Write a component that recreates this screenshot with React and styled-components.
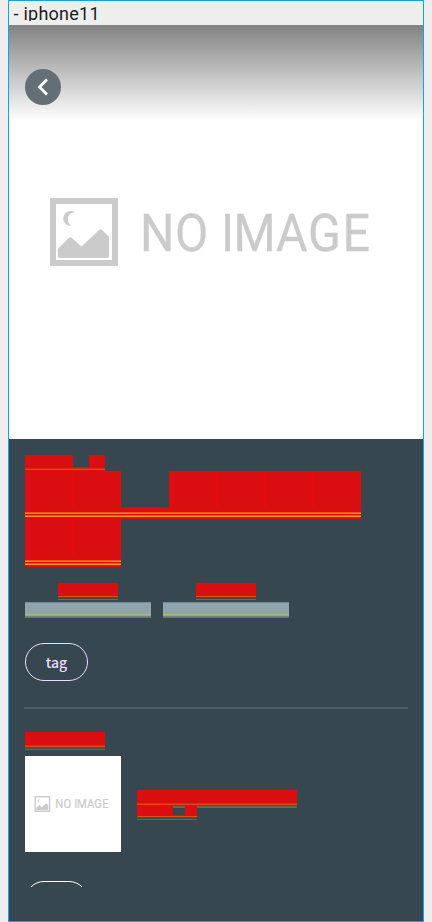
import React from 'react';
import styled, { createGlobalStyle } from 'styled-components';

const red = '#da0e10';
const seam = '#e60b0e';
const slate = '#37474f';

const Global = createGlobalStyle`
  *, *::before, *::after { box-sizing: border-box; }
  body { margin: 0; background: #eeeeee; overflow: hidden; }
`;

const Page = styled.div`
  height: 922px;
  padding-left: 8px;
  background: #eeeeee;
`;

const Frame = styled.div`
  width: 416px;
  height: 922px;
  border: 1px solid #0da5ec;
  display: flex;
  flex-direction: column;
  background: ${slate};
`;

const TitleStrip = styled.div`
  height: 24px;
  flex: none;
  background: #eeeeee;
`;

const Title = styled.div`
  height: 20px;
  padding-left: 4.5px;
  overflow: hidden;
  white-space: nowrap;
  font: 400 18px/25px Roboto, sans-serif;
  letter-spacing: 0.25px;
  color: #1c1c1e;
`;

const Hero = styled.div`
  height: 414px;
  flex: none;
  position: relative;
  background: #fff;
`;

const Shade = styled.div`
  position: absolute;
  inset: 0 0 auto;
  height: 96px;
  padding: 44px 16px 0;
  background: linear-gradient(rgba(0, 0, 0, 0.49), rgba(0, 0, 0, 0));
`;

const Back = styled.button`
  width: 36px;
  height: 36px;
  padding: 0;
  border: 0;
  border-radius: 50%;
  background: #636f75;
  display: block;
`;

const Picture = styled.svg`
  display: block;
  width: ${p => p.$size}px;
  height: ${p => p.$size}px;
  background: #fff;
`;

const Panel = styled.div`
  flex: 1;
  min-height: 0;
  padding: 16px 16px 0;
`;

const Row = styled.div`
  display: flex;
  height: ${p => p.$h}px;
`;

const Block = styled.div`
  width: ${p => p.$w}px;
  height: ${p => p.$h}px;
  margin-left: ${p => p.$left || 0}px;
  background: ${p => p.$bg || red};
`;

const Seams = styled(Block)`
  background:
    linear-gradient(${red}, ${red}) 0 0 / 1px 100% no-repeat,
    linear-gradient(90deg, ${seam} 2px, ${red} 2px) 47px 0 / 48px 100%;
`;

const Stats = styled.div`
  display: flex;
  gap: 12px;
  margin-top: 16px;
`;

const Stat = styled.div`
  width: 126px;
  display: flex;
  flex-direction: column;
  gap: 2px;
`;

const StatLabel = styled.div`
  width: 60px;
  height: 17px;
  margin-left: 33px;
  background: linear-gradient(${red} 13px, #d85503 13px 14px, #d60e10 14px 15px, #4b3f45 15px 16px, #687447 16px);
`;

const StatValue = styled.div`
  height: 16px;
  background: linear-gradient(#78898f 1px, #90a4ae 1px 12px, #adb773 12px 13px, #90a4ae 13px 14px, #718489 14px 15px, #687447 15px);
`;

const Tag = styled.div`
  width: 63px;
  height: 38px;
  border: 1px solid ${p => p.$color};
  border-radius: 19px;
  color: ${p => p.$color};
  font: 500 14px/36px "Noto Sans CJK JP", sans-serif;
  text-align: center;
`;

const TagSlot = styled.div`
  margin-top: ${p => p.$top}px;
  height: ${p => p.$h}px;
  overflow: hidden;
`;

const Divider = styled.div`
  width: 384px;
  height: 2px;
  margin: 26px 0 0 -1px;
  background: #4f5e65;
`;

const Heading = styled.div`
  width: 80px;
  height: 18px;
  margin-top: 23px;
  background: linear-gradient(${red} 13px, #dc280e 13px 14px, #e34b0c 14px 15px, ${red} 15px 16px, #4c514b 16px 17px, #5c6a4d 17px);
`;

const Item = styled.div`
  display: flex;
  gap: 16px;
  height: 96px;
  margin-top: 6px;
`;

const Details = styled.div`
  padding-top: 34px;
`;

const DetailLine = styled.div`
  width: 160px;
  height: 16px;
  background: linear-gradient(${red} 13px, #dc280e 13px 14px, #e34b0c 14px 15px, ${red} 15px);
`;

const titleLines = `linear-gradient(transparent 5px, #ec560b 5px 6px, #f59803 6px 7px, transparent 7px 8px, #ec560b 8px 9px, #f59803 9px 10px, transparent 10px)`;
const smallLines = `linear-gradient(${red} 1px, #e34b0c 1px 2px, ${red} 2px 3px, #3d4b4e 3px 4px, #5c6a4d 4px)`;

function NoImage({ size }) {
  return (
    <Picture $size={size} viewBox="0 0 414 414" role="img" aria-label="NO IMAGE">
      <g fill="#cbcbcb">
        <path fillRule="evenodd" d="M41 173H109V241H41ZM47 179V235H103V179Z" />
        <path d="M66 187.3Q58.8 188 58.8 193.8Q59 198.5 62 201A7.5 7.5 0 1 1 66 187.3Z" />
        <path d="M48.8 224L59.8 212.9Q61.3 211.5 62.8 212.9L72.5 221.5L89.5 205.5Q91.5 203.5 93.5 205.5L100 211.8V231Q100 233 98 233H50.8Q48.8 233 48.8 231Z" />
        <text
          transform="scale(.93 1)"
          x="140.8 178.6 210 228.1 241.3 287.1 321.5 358.7"
          y="226"
          fontFamily="Roboto, sans-serif"
          fontSize="52"
          stroke="#cbcbcb"
          strokeWidth={size < 200 ? 0.9 : 0.3}
        >NO IMAGE</text>
      </g>
    </Picture>
  );
}

export default function App() {
  return (
    <>
      <Global />
      <Page>
        <Frame>
          <TitleStrip><Title>- iphone11</Title></TitleStrip>
          <Hero>
            <NoImage size={414} />
            <Shade>
              <Back aria-label="Back">
                <svg width="36" height="36" viewBox="0 0 36 36" fill="none">
                  <path d="M22 10.5L14.5 18L22 25.5" stroke="#fff" strokeWidth="2.8" />
                </svg>
              </Back>
            </Shade>
          </Hero>
          <Panel>
            <Row $h={12}>
              <Block $w={48} $h={12} />
              <Block $left={16} $w={16} $h={12} />
            </Row>
            <Block $w={80} $h={4} $bg={`linear-gradient(${red} 1px, #dc280e 1px 2px, #e34b0c 2px 3px, ${red} 3px)`} />
            <Row $h={36}>
              <Seams $w={96} $h={36} />
              <Seams $left={48} $w={192} $h={36} />
            </Row>
            <Block $w={336} $h={12} $bg={`${titleLines}, ${red}`} />
            <Seams $w={96} $h={36} />
            <Block $w={96} $h={12} $bg={`${titleLines}, ${red}`} />
            <Stats>
              <Stat><StatLabel /><StatValue /></Stat>
              <Stat><StatLabel /><StatValue /></Stat>
            </Stats>
            <TagSlot $top={25} $h={38}><Tag $color="#eadcff">tag</Tag></TagSlot>
            <Divider />
            <Heading />
            <Item>
              <NoImage size={96} />
              <Details>
                <DetailLine />
                <Row $h={9}>
                  <Block $w={36} $h={9} />
                  <Block $w={12} $h={2} $bg="#5c6a4d" />
                  <Block $w={12} $h={9} />
                  <Block $w={100} $h={2} $bg="#5c6a4d" />
                </Row>
                <Block $w={60} $h={5} $bg={smallLines} />
              </Details>
            </Item>
            <TagSlot $top={29} $h={6}><Tag $color="#fff" /></TagSlot>
          </Panel>
        </Frame>
      </Page>
    </>
  );
}
